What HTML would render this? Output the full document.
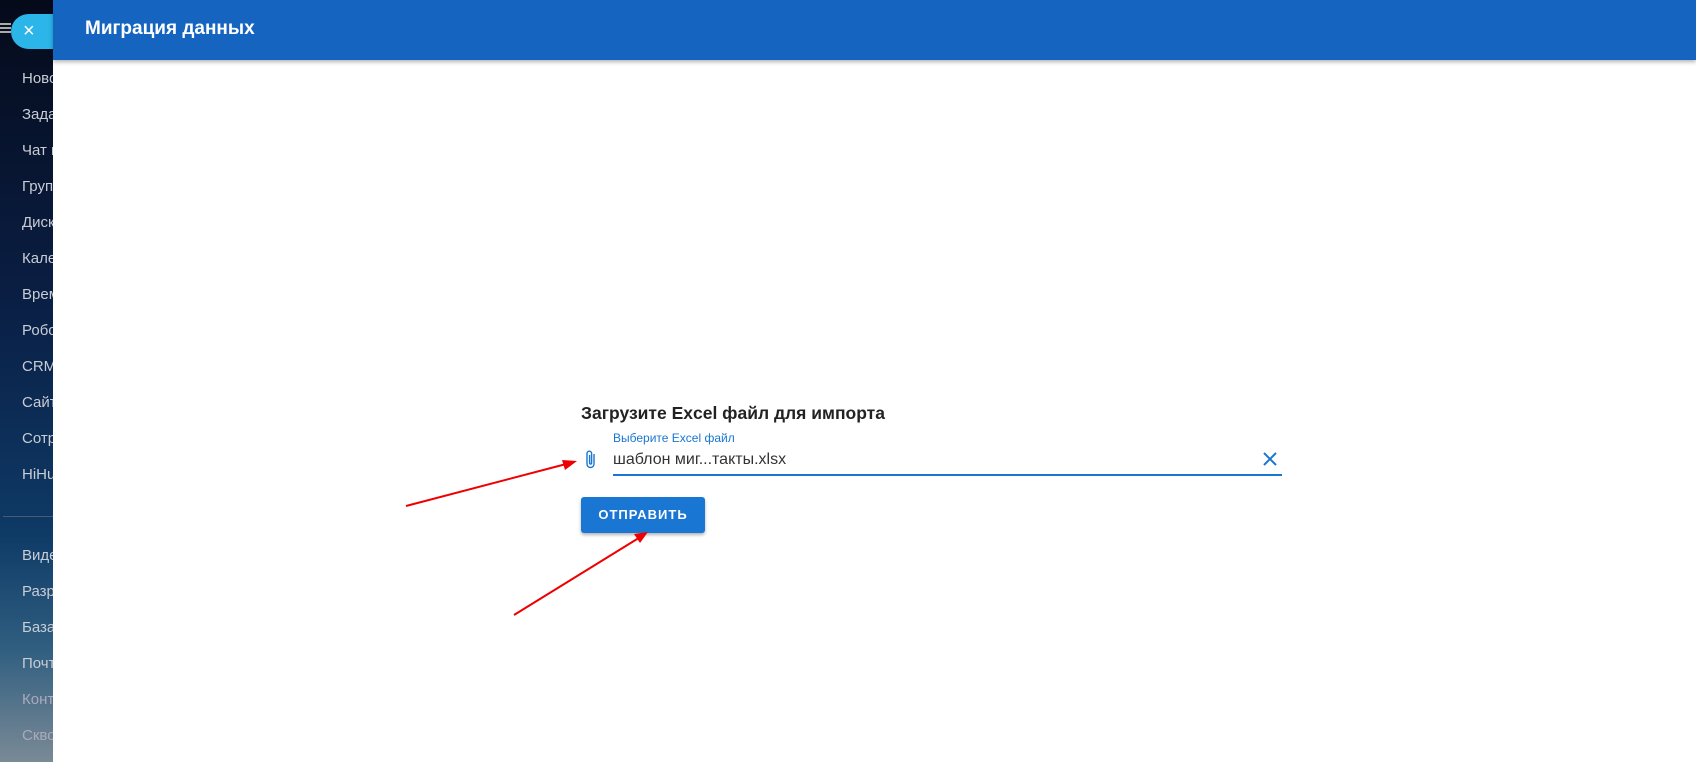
<!DOCTYPE html>
<html><head><meta charset="utf-8"><style>
*{margin:0;padding:0;box-sizing:border-box}
body{width:1696px;height:762px;overflow:hidden;position:relative;font-family:"Liberation Sans",sans-serif;background:#fff}
#side{position:absolute;left:0;top:0;width:53px;height:762px;background:linear-gradient(180deg,#050a1a 0%,#0a1f45 40%,#0e3a66 70%,#2f5e80 85%,#7a8a96 100%);overflow:hidden}
#side .it{position:absolute;left:22px;font-size:15px;color:#c8ccd4;white-space:nowrap}
#side .dv{position:absolute;left:3px;width:60px;top:516px;height:1px;background:#4a5a70}
#pill{position:absolute;left:11px;top:14px;width:60px;height:35px;border-radius:18px;background:#2bb5e8;color:#fff;font-size:20px;line-height:34px;padding-left:12px}
#ham{position:absolute;left:0;top:23px;width:11px;height:10px;border-top:2px solid #aaa;border-bottom:2px solid #aaa}
#ham:after{content:"";position:absolute;left:0;right:0;top:2px;height:2px;background:#aaa}
#panel{position:absolute;left:53px;top:0;right:0;height:762px;background:#fff}
#hdr{position:absolute;left:53px;top:0;right:0;height:60px;background:#1565c0;box-shadow:0 2px 4px rgba(0,0,0,.3)}
#hdr span{position:absolute;left:32px;top:18px;color:#fff;font-size:19px;font-weight:bold}
.abs{position:absolute;white-space:nowrap}
</style></head><body>
<div id="side">
<div class="it" style="top:70px">Новости</div>
<div class="it" style="top:106px">Задачи</div>
<div class="it" style="top:142px">Чат и</div>
<div class="it" style="top:178px">Группы</div>
<div class="it" style="top:214px">Диск</div>
<div class="it" style="top:250px">Календарь</div>
<div class="it" style="top:286px">Время</div>
<div class="it" style="top:322px">Роботы</div>
<div class="it" style="top:358px">CRM</div>
<div class="it" style="top:394px">Сайты</div>
<div class="it" style="top:430px">Сотрудники</div>
<div class="it" style="top:466px">HiHub</div>
<div class="dv"></div>
<div class="it" style="top:547px">Видео</div>
<div class="it" style="top:583px">Разработка</div>
<div class="it" style="top:619px">База</div>
<div class="it" style="top:655px">Почта</div>
<div class="it" style="top:691px;color:#aab">Контакты</div>
<div class="it" style="top:727px;color:#aab">Сквозная</div>
</div>
<div id="pill">×</div>
<div id="ham"></div>
<div id="panel"></div>
<div id="hdr"><span>Миграция данных</span></div>
<div class="abs" style="left:581px;top:403px;font-size:17.5px;font-weight:bold;color:#222">Загрузите Excel файл для импорта</div>
<div class="abs" style="left:613px;top:431px;font-size:12px;color:#1976d2">Выберите Excel файл</div>
<svg class="abs" style="left:583px;top:449px" width="16" height="22" viewBox="0 0 16 22"><path d="M11 5v10a3.5 3.5 0 0 1-7 0V4.5a2.3 2.3 0 0 1 4.6 0V14a1 1 0 0 1-2 0V6" fill="none" stroke="#1976d2" stroke-width="1.4"/></svg>
<div class="abs" style="left:613px;top:451px;font-size:16px;color:#333">шаблон миг...такты.xlsx</div>
<svg class="abs" style="left:1262px;top:451px" width="16" height="16" viewBox="0 0 16 16"><path d="M2 2L14 14M14 2L2 14" stroke="#1976d2" stroke-width="2"/></svg>
<div class="abs" style="left:613px;top:474px;width:669px;height:2px;background:#1976d2"></div>
<div class="abs" style="left:581px;top:497px;width:124px;height:36px;background:#1976d2;border-radius:3px;box-shadow:0 2px 3px rgba(0,0,0,.3);color:#fff;font-size:13px;font-weight:bold;letter-spacing:1px;text-align:center;line-height:36px">ОТПРАВИТЬ</div>
<svg class="abs" style="left:0;top:0" width="1696" height="762">
<line x1="406" y1="506" x2="570" y2="463" stroke="#e00" stroke-width="2"/>
<polygon points="577,461 562,460 565,470" fill="#e00"/>
<line x1="514" y1="615" x2="642" y2="536" stroke="#e00" stroke-width="2"/>
<polygon points="648,532 634,534 640,543" fill="#e00"/>
</svg>
</body></html>
